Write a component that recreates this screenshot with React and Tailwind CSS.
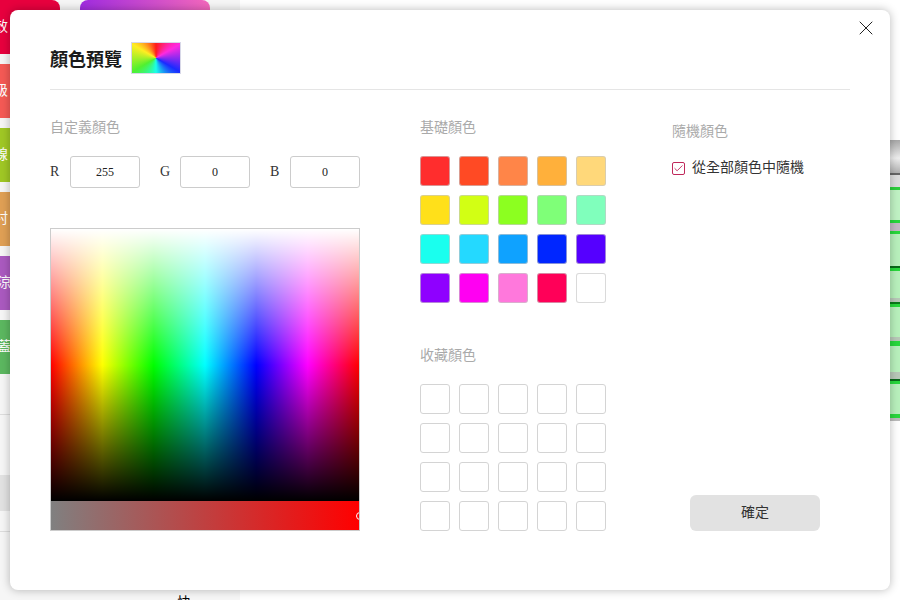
import { Check, X } from "lucide-react";

const baseColors = [
  "bg-[#ff2d2d]", "bg-[#ff4a24]", "bg-[#ff8548]", "bg-[#ffb03b]", "bg-[#ffd87a]",
  "bg-[#ffe01a]", "bg-[#d2ff14]", "bg-[#8cff20]", "bg-[#7fff78]", "bg-[#80ffbc]",
  "bg-[#1affee]", "bg-[#24d9ff]", "bg-[#0fa2ff]", "bg-[#0026ff]", "bg-[#5500ff]",
  "bg-[#8f00ff]", "bg-[#ff00f2]", "bg-[#ff78dc]", "bg-[#ff0058]", "bg-white",
];

const tiles = [
  { text: "效", color: "bg-[#e8003e]", offset: "-ml-1.5" },
  { text: "級", color: "bg-[#f55a55]", offset: "-ml-1.5" },
  { text: "線", color: "bg-[#a0c825]", offset: "-ml-1.5" },
  { text: "村", color: "bg-[#e0a055]", offset: "-ml-1.5" },
  { text: "涼", color: "bg-[#ab5ac0]", offset: "-ml-[3px]" },
  { text: "蓋", color: "bg-[#5cb860]", offset: "-ml-[3px]" },
];

function Label({ children }) {
  return <div className="h-5 text-sm leading-5 text-[#aaaaaa]">{children}</div>;
}

function RgbField({ name, value }) {
  return (
    <div className="flex items-center">
      <span className="w-5 text-sm text-[#333333]">{name}</span>
      <div className="flex h-8 w-[70px] items-center justify-center rounded-[3px] border border-[#cccccc] text-xs text-[#222222]">
        {value}
      </div>
    </div>
  );
}

function Background() {
  return (
    <div className="flex h-[600px] w-[900px] bg-white">
      <div className="flex h-full w-[240px] flex-col bg-[#f6f6f6]">
        <div className="flex shrink-0 gap-5">
          <div className="flex w-[60px] flex-col gap-2.5">
            {tiles.map((t) => (
              <div
                key={t.text}
                className={`flex h-[54px] items-center rounded-r-lg text-sm text-white ${t.color}`}
              >
                <span className={t.offset}>{t.text}</span>
              </div>
            ))}
          </div>
          <div className="h-10 w-[130px] rounded-lg bg-[linear-gradient(to_right,#a02ce0,#f468bc)]" />
        </div>
        <div className="mt-10 h-px shrink-0 bg-[#dddddd]" />
        <div className="mt-[60px] h-9 shrink-0 bg-[#e2e2e2]" />
        <div className="mt-5 h-px shrink-0 bg-[#dddddd]" />
        <div className="mt-[61px] shrink-0 pl-[177px] text-sm leading-5 text-black">快</div>
      </div>
      <div className="ml-auto flex w-2.5 flex-col pt-[140px]">
        <div className="h-[33px] bg-[linear-gradient(to_bottom,#a8a8a8,#eeeeee_55%,#b0b0b0)]" />
        <div className="h-0.5 bg-[#666666]" />
        <div className="h-3 bg-[#dddddd]" />
        <div className="h-[3px] bg-[#2ccf3c]" />
        <div className="h-[30px] bg-[#c0f2c4]" />
        <div className="h-[3px] bg-[#28d83c]" />
        <div className="h-2 bg-[#c4b8c4]" />
        <div className="h-[3px] bg-[#28d83c]" />
        <div className="h-8 bg-[#b8f0bc]" />
        <div className="h-0.5 bg-[#0a6a1a]" />
        <div className="h-[3px] bg-[#28d83c]" />
        <div className="h-[27px] bg-[#b8f0bc]" />
        <div className="h-1 bg-[#b8c8b8]" />
        <div className="h-0.5 bg-[#0a7a1a]" />
        <div className="h-[3px] bg-[#28d83c]" />
        <div className="h-[30px] bg-[#b8f0bc]" />
        <div className="h-1 bg-[#b8c8b8]" />
        <div className="h-[5px] bg-[#28d83c]" />
        <div className="h-[26px] bg-[#b8f0bc]" />
        <div className="h-[7px] bg-[#b8c8b8]" />
        <div className="h-0.5 bg-[#0a6a1a]" />
        <div className="h-[3px] bg-[#28d83c]" />
        <div className="h-[30px] bg-[#b8f0bc]" />
        <div className="h-1 bg-[#28d83c]" />
        <div className="h-[3px] bg-[#bbbbbb]" />
      </div>
    </div>
  );
}

export default function App() {
  return (
    <div className="relative h-[600px] w-[900px] overflow-hidden font-['Liberation_Serif','Noto_Sans_CJK_TC',serif]">
      <Background />
      <div className="absolute left-2.5 top-2.5 flex h-[580px] w-[880px] flex-col rounded-lg bg-white px-10 shadow-[0_0_10px_rgba(0,0,0,0.28)]">
        <button className="absolute right-[12px] top-[6px] text-[#222222]">
          <X size={24} strokeWidth={1} />
        </button>

        <div className="flex items-center gap-[9px] border-b border-[#e5e5e5] pb-[15px] pt-8">
          <h2 className="mt-1 text-lg font-semibold leading-7 text-[#1a1a1a]">顏色預覽</h2>
          <div className="h-8 w-[50px] border border-[#d8d8e8] bg-[conic-gradient(#ff1a1a,#ff2ae0,#1a2aff,#1affe8,#50f030,#ffee22,#ff1a1a)]" />
        </div>

        <div className="flex pt-7">
          <div className="w-[310px]">
            <Label>自定義顏色</Label>
            <div className="mt-[18px] flex gap-5">
              <RgbField name="R" value="255" />
              <RgbField name="G" value="0" />
              <RgbField name="B" value="0" />
            </div>
            <div className="mt-10 border border-[#cccccc]">
              <div className="h-[272px] bg-[linear-gradient(to_bottom,#fff,transparent_50%,#000),linear-gradient(to_right,red,yellow,lime,cyan,blue,magenta,red)]" />
              <div className="relative h-[29px] overflow-hidden bg-[linear-gradient(to_right,#808080,#ff0000)]">
                <div className="absolute -right-[5px] top-[11px] size-2 rounded-full border border-white" />
              </div>
            </div>
          </div>

          <div className="ml-[60px] w-[186px]">
            <Label>基礎顏色</Label>
            <div className="mt-[18px] grid grid-cols-5 gap-[9px]">
              {baseColors.map((c) => (
                <div key={c} className={`size-[30px] rounded-[3px] border border-[#c8c8c8aa] ${c}`} />
              ))}
            </div>
            <div className="mt-[43px]">
              <Label>收藏顏色</Label>
            </div>
            <div className="mt-[18px] grid grid-cols-5 gap-[9px]">
              {Array.from({ length: 20 }).map((_, i) => (
                <div key={i} className="size-[30px] rounded-[3px] border border-[#d4d4d4] bg-white" />
              ))}
            </div>
          </div>

          <div className="ml-[66px] flex flex-1 flex-col pt-1">
            <Label>隨機顏色</Label>
            <div className="mt-4 flex h-5 items-center gap-[7px] text-sm text-[#333333]">
              <div className="flex size-[13px] items-center justify-center rounded-[2px] border border-[#c0285a] text-[#c0285a]">
                <Check size={11} strokeWidth={2} />
              </div>
              <span>從全部顏色中隨機</span>
            </div>
            <button className="ml-[18px] mt-auto h-9 w-[130px] rounded-md bg-[#e2e2e2] text-sm text-[#333333]">
              確定
            </button>
          </div>
        </div>
      </div>
    </div>
  );
}
